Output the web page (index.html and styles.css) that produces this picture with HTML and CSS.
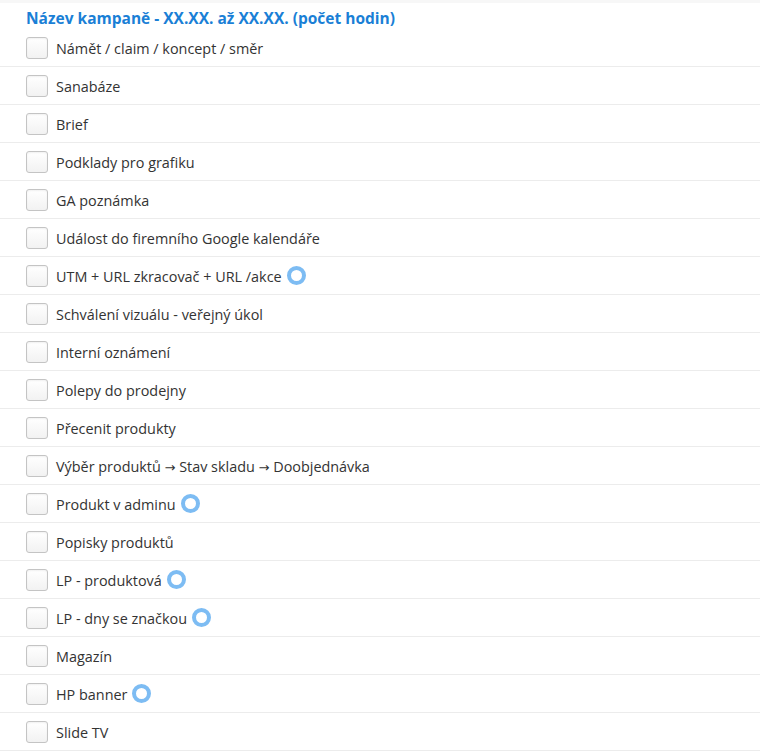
FILE: index.html
```html
<!DOCTYPE html>
<html lang="cs">

<head>
    <meta charset="UTF-8">
    <meta name="viewport" content="width=device-width, initial-scale=1.0">
    <title>Kampaň</title>
    <link rel="stylesheet" href="styles.css">
</head>

<body>
    <div class="panel">
        <h2 class="panel-title">Název kampaně - XX.XX. až XX.XX. (počet hodin)</h2>
        <ul class="checklist">
            <li class="item"><span class="box"></span><span class="label">Námět / claim / koncept / směr</span></li>
            <li class="item"><span class="box"></span><span class="label">Sanabáze</span></li>
            <li class="item"><span class="box"></span><span class="label">Brief</span></li>
            <li class="item"><span class="box"></span><span class="label">Podklady pro grafiku</span></li>
            <li class="item"><span class="box"></span><span class="label">GA poznámka</span></li>
            <li class="item"><span class="box"></span><span class="label">Událost do firemního Google kalendáře</span></li>
            <li class="item"><span class="box"></span><span class="label">UTM + URL zkracovač + URL /akce</span><span class="ring"></span></li>
            <li class="item"><span class="box"></span><span class="label">Schválení vizuálu - veřejný úkol</span></li>
            <li class="item"><span class="box"></span><span class="label">Interní oznámení</span></li>
            <li class="item"><span class="box"></span><span class="label">Polepy do prodejny</span></li>
            <li class="item"><span class="box"></span><span class="label">Přecenit produkty</span></li>
            <li class="item"><span class="box"></span><span class="label">Výběr produktů <span class="arrow">→</span> Stav skladu <span class="arrow">→</span> Doobjednávka</span></li>
            <li class="item"><span class="box"></span><span class="label">Produkt v adminu</span><span class="ring"></span></li>
            <li class="item"><span class="box"></span><span class="label">Popisky produktů</span></li>
            <li class="item"><span class="box"></span><span class="label">LP - produktová</span><span class="ring"></span></li>
            <li class="item"><span class="box"></span><span class="label">LP - dny se značkou</span><span class="ring"></span></li>
            <li class="item"><span class="box"></span><span class="label">Magazín</span></li>
            <li class="item"><span class="box"></span><span class="label">HP banner</span><span class="ring"></span></li>
            <li class="item"><span class="box"></span><span class="label">Slide TV</span></li>
        </ul>
    </div>
</body>

</html>
```

FILE: styles.css
```css
body {
    margin: 0;
    background-color: #ffffff;
    color: #333333;
    font-family: 'Open Sans', 'Liberation Sans', sans-serif;
}

.panel {
    border-top: 3px solid #f7f7f7;
    /* faint edge from the card above */
}

.panel-title {
    margin: 0;
    padding: 5px 26px 0;
    height: 21px;
    font-size: 15.5px;
    font-weight: bold;
    line-height: 21px;
    color: #1a7fd6;
}

.checklist {
    list-style: none;
    margin: 0;
    padding: 0;
}

.item {
    display: flex;
    align-items: center;
    height: 37px;
    padding-left: 26px;
    border-bottom: 1px solid #ececec;
    font-size: 14.4px;
}

.label {
    padding-top: 2px;
}

.arrow {
    font-family: 'DejaVu Sans', sans-serif;
    font-size: 13px;
}

.box {
    width: 20px;
    height: 20px;
    border: 1px solid #c4c4c4;
    border-radius: 3px;
    background: linear-gradient(#ffffff, #f2f2f2);
    box-shadow: inset 0 1px 2px rgba(0, 0, 0, 0.06);
    margin-right: 8px;
    flex-shrink: 0;
}

.ring {
    width: 11px;
    height: 11px;
    border: 4px solid #7dbcf3;
    border-radius: 50%;
    margin-left: 5px;
}
```
